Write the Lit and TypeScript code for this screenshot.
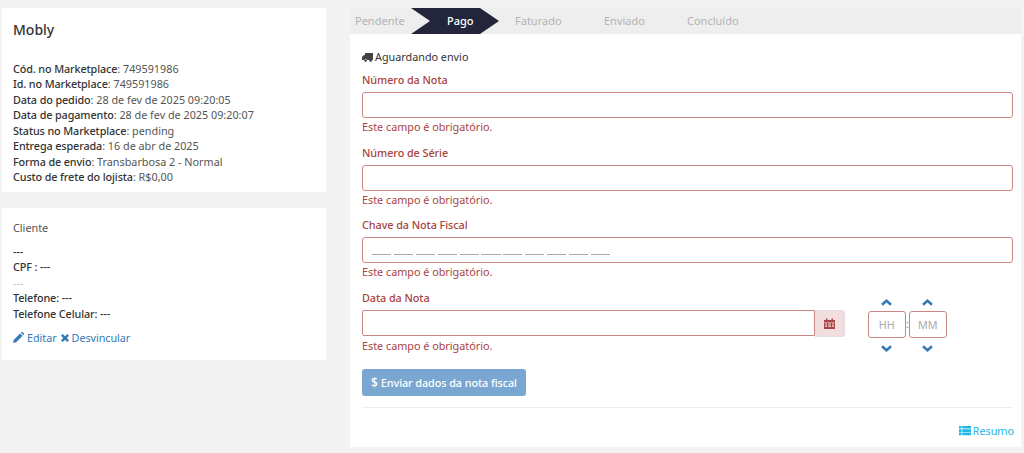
import { LitElement, html, css } from "lit";
import { customElement } from "lit/decorators.js";

const info: [string, string][] = [
  ["Cód. no Marketplace", "749591986"],
  ["Id. no Marketplace", "749591986"],
  ["Data do pedido", "28 de fev de 2025 09:20:05"],
  ["Data de pagamento", "28 de fev de 2025 09:20:07"],
  ["Status no Marketplace", "pending"],
  ["Entrega esperada", "16 de abr de 2025"],
  ["Forma de envio", "Transbarbosa 2 - Normal"],
  ["Custo de frete do lojista", "R$0,00"],
];

@customElement("app-root")
export class AppRoot extends LitElement {
  static styles = css`
    :host { display: block; height: 453px; background: #f3f3f4; font-family: "Noto Sans", sans-serif; font-size: 10.8px; line-height: 15.43px; color: #555; overflow: hidden; }
    * { box-sizing: border-box; }
    .page { display: flex; height: 453px; padding: 8px 3px 6px 2px; gap: 23.5px; align-items: flex-start; }
    .left { width: 324px; display: flex; flex-direction: column; gap: 16px; flex: none; }
    .card { background: #fff; padding: 0 11px; }
    .mobly { height: 184px; padding-top: 13px; }
    h2 { margin: 0 0 22px; font-size: 14px; line-height: 18px; font-weight: 500; color: #333; }
    .mobly b, .client b { font-weight: 500; color: #333; letter-spacing: -0.11px; }
    .client { height: 152px; padding-top: 12px; }
    .client .t { margin-bottom: 8px; line-height: 16px; }
    .muted { color: #a9c6e3; }
    .links { margin-top: 9px; color: #337ab7; display: flex; align-items: center; gap: 3px; letter-spacing: -0.05px; }
    .links svg { fill: #337ab7; }
    .right { flex: 1; height: 439px; background: #fff; display: flex; flex-direction: column; }
    .steps { height: 26px; background: #eee; display: flex; align-items: center; color: #b4b4b4; position: relative; flex: none; font-size: 11px; }
    .steps span { position: absolute; top: 5px; }
    .steps .arrow { position: absolute; left: 61.5px; top: 0; }
    .steps .on { color: #fff; font-weight: 500; }
    .body { flex: 1; padding: 15px 8px 0 12.5px; display: flex; flex-direction: column; }
    .status { color: #333; display: flex; align-items: center; gap: 2px; height: 16px; margin-bottom: 7px; }
    label { display: block; font-weight: 500; color: #a94442; height: 16px; margin-bottom: 4px; letter-spacing: -0.05px; }
    .input { height: 26px; border: 1px solid #c98684; border-radius: 3px; background: #fff; }
    .err { color: #a94442; height: 16px; margin-top: 1px; }
    .field { margin-bottom: 9.7px; }
    .key { display: flex; align-items: flex-end; gap: 2.7px; padding: 0 0 7px 9px; }
    .key i { display: block; width: 19.2px; height: 1px; background: #aaa; }
    .date { display: flex; align-items: flex-start; }
    .dl { width: 482.5px; flex: none; }
    .dl .rowi { display: flex; }
    .dl .input { flex: 1; border-radius: 2px 0 0 2px; }
    .addon { width: 30px; height: 27px; background: #f2dede; border: 1px solid #e6dcdc; border-left: 0; border-radius: 0 3px 3px 0; display: flex; align-items: center; justify-content: center; }
    .time { margin-left: 23px; display: flex; align-items: flex-start; }
    .tcol { width: 38.5px; display: flex; flex-direction: column; align-items: center; }
    .up { height: 21px; padding-top: 4px; display: flex; align-items: center; justify-content: center; }
    .down { height: 20px; display: flex; align-items: center; justify-content: center; }
    .tbox { width: 100%; height: 27px; border: 1px solid #c98684; border-radius: 3px; display: flex; align-items: center; justify-content: center; color: #aaa; }
    .sep { width: 2.5px; text-align: center; color: #888; margin-top: 26px; }
    .btn { width: 164px; height: 27px; margin-top: 1.5px; background: #7aa7d1; border-radius: 3px; color: #fff; font-weight: 500; letter-spacing: -0.06px; display: flex; align-items: center; justify-content: center; gap: 3px; }
    hr { border: 0; border-top: 1px solid #eee; margin: 11px 0 0; }
    .resumo { margin: 15px -1px 0 0; color: #23b7e5; display: flex; justify-content: flex-end; align-items: center; gap: 2px; }
    .resumo svg { fill: #23b7e5; }
  `;

  private chevron(up: boolean) {
    return html`<svg width="11" height="7" viewBox="0 0 11 7"><path fill="none" stroke="#337ab7" stroke-width="2.5" d=${up ? "M1 5.7l4.5-4 4.5 4" : "M1 1.3l4.5 4 4.5-4"}/></svg>`;
  }

  render() {
    return html`<div class="page">
      <div class="left">
        <div class="card mobly">
          <h2>Mobly</h2>
          ${info.map(([k, v]) => html`<div><b>${k}</b>: ${v}</div>`)}
        </div>
        <div class="card client">
          <div class="t">Cliente</div>
          <div><b>---</b></div>
          <div><b>CPF : ---</b></div>
          <div class="muted">---</div>
          <div><b>Telefone: ---</b></div>
          <div><b>Telefone Celular: ---</b></div>
          <div class="links">
            <svg width="11" height="11" viewBox="0 0 12 12"><path d="M0 12l.7-3.4L7.8 1.5l2.7 2.7-7.1 7.1zM8.6.7l.6-.6a.8.8 0 0 1 1.1 0l1.6 1.6a.8.8 0 0 1 0 1.1l-.6.6z"/></svg>
            <span>Editar</span>
            <svg width="8" height="8" viewBox="0 0 10 10" style="margin-left:1px"><path d="M0 2.2L2.2 0 5 2.8 7.8 0 10 2.2 7.2 5 10 7.8 7.8 10 5 7.2 2.2 10 0 7.8 2.8 5z"/></svg>
            <span>Desvincular</span>
          </div>
        </div>
      </div>
      <div class="right">
        <div class="steps">
          <span style="left:5.5px">Pendente</span>
          <svg class="arrow" width="88" height="26" viewBox="0 0 88 26"><path d="M0 0H69L88 13 69 26H0L19 13z" fill="#23263a"/></svg>
          <span class="on" style="left:97.5px">Pago</span>
          <span style="left:165.5px">Faturado</span>
          <span style="left:254.5px">Enviado</span>
          <span style="left:337.5px">Concluído</span>
        </div>
        <div class="body">
          <div class="status">
            <svg width="11" height="9" viewBox="0 0 11 9"><path fill="#444" d="M3 0h8v7H5a1.3 1.3 0 0 0-2.6 0H2H0V4l2-2h1z"/><circle cx="3.6" cy="7.6" r="1.3" fill="#444"/><circle cx="8.6" cy="7.6" r="1.3" fill="#444"/></svg>
            <span>Aguardando envio</span>
          </div>
          <div class="field"><label>Número da Nota</label><div class="input"></div><div class="err">Este campo é obrigatório.</div></div>
          <div class="field"><label>Número de Série</label><div class="input"></div><div class="err">Este campo é obrigatório.</div></div>
          <div class="field"><label>Chave da Nota Fiscal</label><div class="input key">${Array.from({ length: 11 }, () => html`<i></i>`)}</div><div class="err">Este campo é obrigatório.</div></div>
          <div class="field date">
            <div class="dl">
              <label>Data da Nota</label>
              <div class="rowi"><div class="input"></div><div class="addon"><svg width="11" height="11" viewBox="0 0 11 11"><path fill="#a94442" d="M0 2h2V.5h1.5V2h4V.5H9V2h2v2H0zM0 4.6h11V11H0zm1 .8v1.2h2V5.4zm3 0v1.2h3V5.4zm4 0v1.2h2V5.4zM1 7.6v1.2h2V7.6zm3 0v1.2h3V7.6zm4 0v1.2h2V7.6z"/></svg></div></div>
              <div class="err">Este campo é obrigatório.</div>
            </div>
            <div class="time">
              <div class="tcol"><div class="up">${this.chevron(true)}</div><div class="tbox">HH</div><div class="down">${this.chevron(false)}</div></div>
              <div class="sep">:</div>
              <div class="tcol"><div class="up">${this.chevron(true)}</div><div class="tbox">MM</div><div class="down">${this.chevron(false)}</div></div>
            </div>
          </div>
          <div class="btn"><span style="font-size:12px">$</span><span>Enviar dados da nota fiscal</span></div>
          <hr />
          <div class="resumo"><svg width="12" height="10" viewBox="0 0 12 10"><path d="M0 0h2.6v2.6H0zM3.2 0H12v2.6H3.2zM0 3.3h2.6v2.6H0zM3.2 3.3H12v2.6H3.2zM0 6.6h2.6v2.6H0zM3.2 6.6H12v2.6H3.2z"/></svg><span>Resumo</span></div>
        </div>
      </div>
    </div>`;
  }
}
